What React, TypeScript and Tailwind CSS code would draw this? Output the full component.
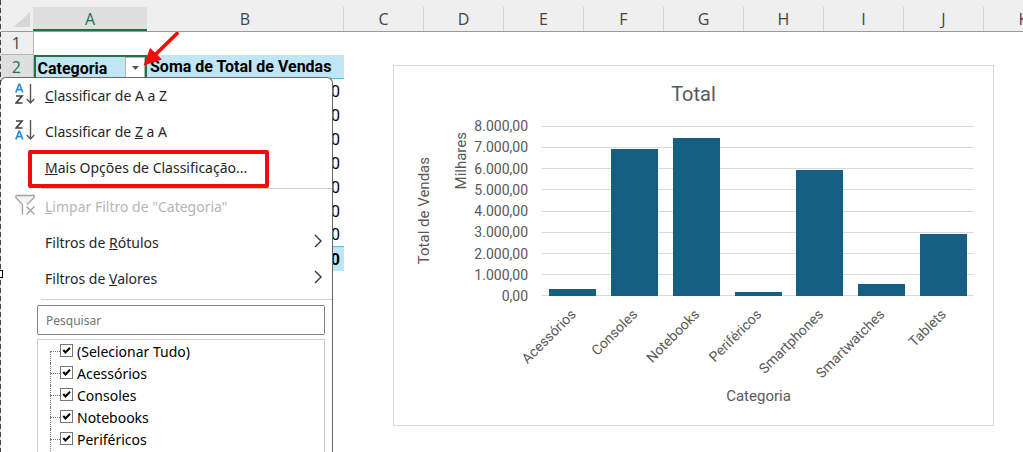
import React from 'react';

interface SalesRow {
  name: string;
  value: number;
}

const sales: SalesRow[] = [
  { name: 'Acessórios', value: 340 },
  { name: 'Consoles', value: 6930 },
  { name: 'Notebooks', value: 7450 },
  { name: 'Periféricos', value: 200 },
  { name: 'Smartphones', value: 5930 },
  { name: 'Smartwatches', value: 580 },
  { name: 'Tablets', value: 2900 },
];

const AXIS_MAX = 8000;
const ticks = ['8.000,00', '7.000,00', '6.000,00', '5.000,00', '4.000,00', '3.000,00', '2.000,00', '1.000,00', '0,00'];
const columns = ['C', 'D', 'E', 'F', 'G', 'H', 'I', 'J', 'K'];
const filterItems = ['(Selecionar Tudo)', 'Acessórios', 'Consoles', 'Notebooks', 'Periféricos'];

const SortIcon = ({ reverse = false }: { reverse?: boolean }) => {
  const a = 'M.8 9 4 .8h.6L7.800 9M2 6.200h4.600';
  const z = 'M1 1.500h6L1.200 8.500h6.300';
  return (
    <svg width="20" height="22" viewBox="0 0 20 22" fill="none" strokeWidth="1.7" className="-mt-1" aria-hidden="true">
      <path d={reverse ? z : a} stroke={reverse ? '#444' : '#2b8fd6'} transform="translate(0 .5)" />
      <path d={reverse ? a : z} stroke={reverse ? '#2b8fd6' : '#444'} transform="translate(0 11.5)" />
      <path d="M15.500 1v19M11.800 16l3.700 4 3.700-4" stroke="#555" strokeWidth="1.4" />
    </svg>
  );
};

const ClearFilterIcon = () => (
  <svg width="20" height="22" viewBox="0 0 20 22" fill="none" stroke="#a3a3a3" strokeWidth="1.3" className="-mt-1" aria-hidden="true">
    <path d="M.8 1.500h18.400v2L12 10.500M.8 1.500v2l6.700 7V20.500" fill="#f3f3f3" />
    <path d="M11.500 12.500l8 8M19.500 12.500l-8 8" />
  </svg>
);

const Chevron = () => (
  <svg width="8" height="14" viewBox="0 0 8 14" fill="none" stroke="#333" strokeWidth="1.4" className="-mt-1" aria-hidden="true">
    <path d="M1 1l6 6-6 6" />
  </svg>
);

interface MenuItemProps {
  icon?: React.ReactNode;
  disabled?: boolean;
  submenu?: boolean;
  children: React.ReactNode;
}

const MenuItem = ({ icon, disabled, submenu, children }: MenuItemProps) => (
  <button
    type="button"
    disabled={disabled}
    className={`flex h-9 w-full items-center pr-2.5 text-left ${disabled ? 'text-[#b5b5b5]' : 'text-[#262626]'}`}
  >
    <span className="flex w-11 shrink-0 pl-3.5">{icon}</span>
    <span className="flex-1 whitespace-nowrap">{children}</span>
    {submenu && <Chevron />}
  </button>
);

const FilterMenu = () => (
  <div className="absolute top-[77px] bottom-0 left-0 flex w-[333px] flex-col rounded-t-md border border-b-0 border-[#666] bg-white font-['Noto_Sans',sans-serif] text-sm">
    <MenuItem icon={<SortIcon />}><u>C</u>lassificar de A a Z</MenuItem>
    <MenuItem icon={<SortIcon reverse />}>Classificar de <u>Z</u> a A</MenuItem>
    <div className="relative">
      <MenuItem><u>M</u>ais Opções de Classificação...</MenuItem>
      <div className="pointer-events-none absolute top-0 left-[27px] h-[38px] w-[241px] rounded-xs border-4 border-[#f20d0d]" />
    </div>
    <hr className="mt-0.5 ml-10 border-[#d0d0d0]" />
    <MenuItem icon={<ClearFilterIcon />} disabled><u>L</u>impar Filtro de "Categoria"</MenuItem>
    <MenuItem submenu>Filtros de <u>R</u>ótulos</MenuItem>
    <MenuItem submenu>Filtros de <u>V</u>alores</MenuItem>
    <hr className="mt-0.5 ml-10 border-[#d0d0d0]" />
    <input
      type="text"
      aria-label="Pesquisar"
      placeholder="Pesquisar"
      className="mt-[5px] mr-[7px] ml-9 h-[30px] shrink-0 rounded-xs border border-[#858585] px-2 text-xs placeholder:text-[#737373]"
    />
    <ul className="mt-1 mr-[7px] ml-9 flex-1 border border-b-0 border-[#cfcfcf] pt-px text-black">
      {filterItems.map((item, i) => (
        <li key={item} className="relative h-[22px] pl-[22px]">
          <span className={`absolute bottom-0 left-3 border-l border-dotted border-[#777] ${i === 0 ? 'top-2.5' : 'top-0'}`} />
          <span className="absolute top-2.5 left-3 w-2.5 border-t border-dotted border-[#777]" />
          <label className="flex h-full items-center gap-1">
            <span className="relative -mt-1 flex size-[13px] shrink-0">
              <input type="checkbox" defaultChecked className="size-full appearance-none border border-[#777] bg-white" />
              <svg viewBox="0 0 13 13" className="pointer-events-none absolute inset-0" fill="none" stroke="#000" strokeWidth="2" aria-hidden="true">
                <path d="M3.300 6l2.200 2.500L10 3.800" />
              </svg>
            </span>
            {item}
          </label>
        </li>
      ))}
    </ul>
  </div>
);

const SalesChart = () => (
  <section className="absolute top-[65px] left-[393px] flex h-[361px] w-[601px] flex-col border border-[#d9d9d9] bg-white font-[Roboto,sans-serif] text-sm text-[#595959]">
    <h2 className="mt-3 text-center text-xl leading-8">Total</h2>
    <div className="mt-4 flex pr-[19px]">
      <div className="flex w-[77px] shrink-0 items-center justify-between pl-5 text-[15px]">
        <span className="rotate-180 leading-5 whitespace-nowrap [writing-mode:vertical-rl]">Total de Vendas</span>
        <span className="mb-[100px] rotate-180 leading-5 whitespace-nowrap [writing-mode:vertical-rl]">Milhares</span>
      </div>
      <div className="-my-2.5 flex w-[57px] shrink-0 flex-col justify-between text-right">
        {ticks.map((tick) => <span key={tick} className="leading-5">{tick}</span>)}
      </div>
      <div className="relative ml-3.5 h-[170px] flex-1">
        <div className="absolute inset-0 flex flex-col justify-between">
          {ticks.map((tick) => <div key={tick} className="border-t border-[#d9d9d9]" />)}
        </div>
        <div className="relative flex h-full items-end">
          {sales.map((row) => (
            <div key={row.name} className="flex h-full flex-1 items-end justify-center">
              <div className="w-[47px] bg-[#156082]" style={{ height: `${(row.value / AXIS_MAX) * 100}%` }} />
            </div>
          ))}
        </div>
      </div>
    </div>
    <div className="mr-[19px] ml-[148px] flex h-[88px] pt-2.5">
      {sales.map((row) => (
        <div key={row.name} className="flex min-w-0 flex-1 justify-end pr-9">
          <span className="h-4 origin-top-right -rotate-45 leading-4 whitespace-nowrap">{row.name}</span>
        </div>
      ))}
    </div>
    <p className="ml-[130px] text-center text-[15px] leading-6">Categoria</p>
  </section>
);

const Sheet = () => (
  <table className="w-[1064px] table-fixed border-collapse font-[Roboto,sans-serif] text-base text-black">
    <thead>
      <tr className="h-[31px] border-b border-[#999] bg-[#efefef] font-['Open_Sans',sans-serif] text-[#444]">
        <th className="w-[33px] p-0" aria-label="Selecionar tudo">
          <svg width="17" height="16" viewBox="0 0 17 16" className="mt-2 ml-3.5" aria-hidden="true">
            <path d="M16 0v15H0z" fill="#d6d6d6" />
          </svg>
        </th>
        <th className="w-[114px] p-0 pt-[7px] font-normal">
          <div className="h-6 border-b-2 border-[#217346] bg-[#dfdfdf] leading-6 text-[#217346]">A</div>
        </th>
        <th className="w-[197px] p-0 pt-[7px] font-normal">
          <div className="h-6 border-r border-[#d2d2d2] leading-6">B</div>
        </th>
        {columns.map((col) => (
          <th key={col} className="w-20 p-0 pt-[7px] font-normal">
            <div className="h-6 border-r border-[#d2d2d2] leading-6">{col}</div>
          </th>
        ))}
      </tr>
    </thead>
    <tbody>
      <tr className="h-[23px]">
        <th className="border-r border-b border-[#b5b5b5] bg-[#efefef] p-0 font-['Open_Sans',sans-serif] leading-5 font-normal text-[#444]">1</th>
        <td colSpan={11} />
      </tr>
      <tr className="h-6 font-bold">
        <th className="border-r border-[#b5b5b5] bg-[#dfdfdf] p-0 font-['Open_Sans',sans-serif] leading-5 font-normal text-[#217346]">2</th>
        <td className="bg-[#c0e6f5] p-0">
          <div className="flex h-6 items-center justify-between border-2 border-b-0 border-[#217346] pl-0.5">
            <span className="pt-0.5 leading-5">Categoria</span>
            <button type="button" aria-label="Filtrar Categoria" className="flex h-[22px] w-5 items-center justify-center border border-[#b5b5b5] bg-white">
              <svg width="7" height="4" viewBox="0 0 7 4" aria-hidden="true"><path d="M0 0h7L3.500 4z" fill="#555" /></svg>
            </button>
          </div>
        </td>
        <td className="border-b border-[#62b5d6] bg-[#c0e6f5] p-0 pt-0.5 pl-[3px] leading-5 whitespace-nowrap">Soma de Total de Vendas</td>
      </tr>
      {sales.map((row) => (
        <tr key={row.name} className="h-6">
          <td colSpan={2} className="p-0" />
          <td className="p-0 pt-0.5 pr-1 text-right leading-5">0</td>
        </tr>
      ))}
      <tr className="h-6 font-bold">
        <td colSpan={2} className="p-0" />
        <td className="border-t border-[#62b5d6] bg-[#c0e6f5] p-0 pt-0.5 pr-1 text-right leading-5">0</td>
      </tr>
    </tbody>
  </table>
);

export default function App() {
  return (
    <main className="relative h-screen overflow-hidden bg-white">
      <Sheet />
      <SalesChart />
      <FilterMenu />
      <svg width="42" height="36" viewBox="0 0 42 36" className="absolute top-8 left-[142px]" fill="none" aria-hidden="true">
        <path d="M35 1.500 14 22" stroke="#f20d0d" strokeWidth="3.800" strokeLinecap="round" />
        <path d="M1.500 33.500 8 16 13 20.500 20 27.500z" fill="#f20d0d" />
      </svg>
      {/* page break marker */}
      <div className="absolute inset-y-0 left-0 w-px bg-[repeating-linear-gradient(to_bottom,#444_0_5px,#ddd_5px_8px)]" />
      <div className="absolute top-[270px] -left-px h-2 w-1 border border-black bg-white" />
    </main>
  );
}
